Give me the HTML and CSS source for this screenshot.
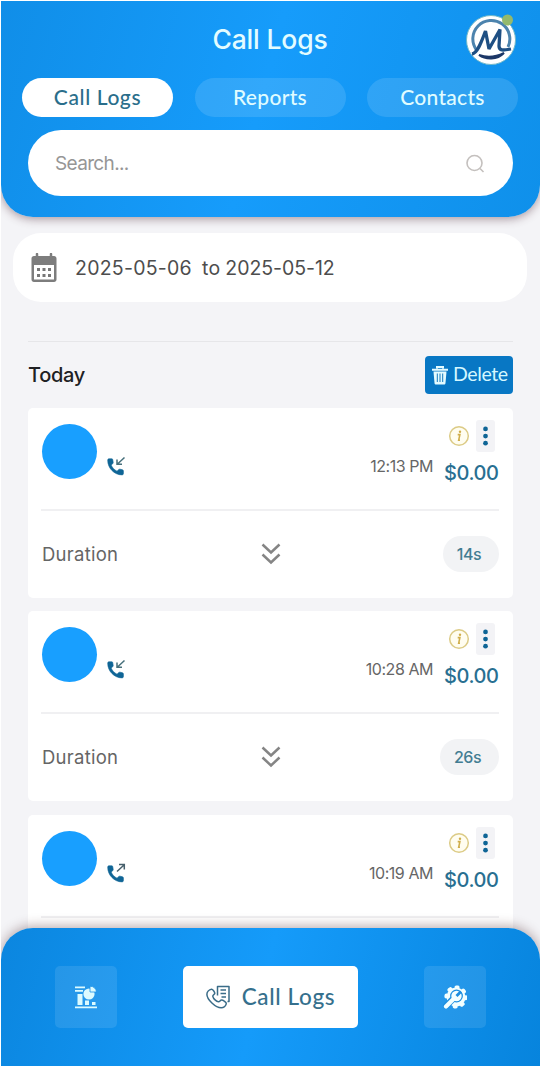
FILE: index.html
```html
<!DOCTYPE html>
<html lang="en">
<head>
<meta charset="utf-8">
<title>Call Logs</title>
<link rel="stylesheet" href="styles.css">
</head>
<body>
<svg class="defs" width="0" height="0" aria-hidden="true">
  <symbol id="handset" viewBox="0 0 18 18"><path d="M.7 2.2C.7 1.3 1.2.8 2 .8h2.700c.7 0 1 .5 1.100 1.100l.4 2.500c.1.5 0 .9-.4 1.200L4.200 7.200c1.200 2.600 3.200 4.600 5.800 6l1.800-1.700c.4-.3.800-.4 1.300-.3l2.300.5c.7.2 1 .6 1 1.200v2.700c0 .8-.5 1.300-1.300 1.300C7.300 16.900.7 10.200.7 2.200z" fill="#0f6596" stroke="#0f6596" stroke-width=".6"/></symbol>
  <symbol id="incoming" viewBox="0 0 20 20"><use href="#handset" x="0" y="2" width="18" height="18"/><path d="M17.500 1.500 10.500 8M10 3.500V8.300h5" fill="none" stroke="#47707c" stroke-width="1.500"/></symbol>
  <symbol id="outgoing" viewBox="0 0 20 20"><use href="#handset" x="0" y="2" width="18" height="18"/><path d="M10 8.500 17 2M12 1.500h5.300v5" fill="none" stroke="#47606c" stroke-width="1.500"/></symbol>
  <symbol id="info" viewBox="0 0 22 22"><circle cx="11" cy="11" r="9.300" fill="#fffdf0" stroke="#dccb86" stroke-width="1.500"/><circle cx="12" cy="6.800" r="1.200" fill="#d0ae4b"/><path d="M9.700 9.600h2.200l-1.200 5.600h1.300" fill="none" stroke="#d0ae4b" stroke-width="1.600"/></symbol>
  <symbol id="dots" viewBox="0 0 20 32"><g fill="#0f6596"><circle cx="10" cy="8.500" r="2.500"/><circle cx="10" cy="16" r="2.500"/><circle cx="10" cy="23.500" r="2.500"/></g></symbol>
  <symbol id="chevrons" viewBox="0 0 20 22"><path d="m1.500 1.500 8.500 8 8.500-8M1.500 11.500l8.500 8 8.500-8" fill="none" stroke="#858585" stroke-width="2.500"/></symbol>
</svg>
<div class="app">
  <header class="header">
    <div class="titlebar">
      <h1 class="title">Call Logs</h1>
      <svg class="avatar" viewBox="0 0 52 52" aria-label="Profile">
        <circle cx="26" cy="27" r="24.500" fill="#fff" stroke="#72b9c9"/>
        <path d="M11.500 37A18.500 18.500 0 1 1 43 34" fill="none" stroke="#4c83ad" stroke-width="3"/>
        <path d="M14 42c7 5 18 5 25-2-8 4-17 5-25 2z" fill="#1c3767" stroke="#1c3767" stroke-width="2"/>
        <path d="M7 41c6-1 10-14 13.500-23l3.500 18L35 16.500 34 33c0 5 4 4.500 12 3" fill="none" stroke="#1e4f83" stroke-width="3.300" stroke-linejoin="bevel"/>
        <circle cx="42.500" cy="7" r="5.500" fill="#94b96c"/>
      </svg>
    </div>
    <nav class="tabs">
      <a class="tab tab-active">Call Logs</a>
      <a class="tab">Reports</a>
      <a class="tab">Contacts</a>
    </nav>
    <div class="search">
      <span>Search...</span>
      <svg width="20" height="20" viewBox="0 0 20 20"><circle cx="9.500" cy="9" r="7.500" fill="none" stroke="#c4c0be" stroke-width="1.600"/><path d="m15 14.500 3.500 3.500" stroke="#c4c0be" stroke-width="1.600"/></svg>
    </div>
  </header>
  <main class="content">
    <div class="dates">
      <svg width="26" height="30" viewBox="0 0 26 30"><path d="M3 3h20c1.500 0 2.500 1 2.500 2.500v21c0 1.500-1 2.500-2.500 2.500H3C1.500 29 .5 28 .5 26.500v-21C.5 4 1.500 3 3 3zM3 12v14.500h20V12z" fill="#7d7d7d" fill-rule="evenodd"/><path d="M6 1v5M20 1v5" stroke="#7d7d7d" stroke-width="2.500" stroke-linecap="round"/><g fill="#777"><path d="M6 15h3v3H6zM11.500 15h3v3h-3zM17 15h3v3h-3zM6 21h3v3H6zM11.500 21h3v3h-3zM17 21h3v3h-3z"/></g></svg>
      <span class="date date-from">2025-05-06</span><span class="date date-to">to</span><span class="date date-until">2025-05-12</span>
    </div>
    <section class="day">
      <div class="day-head">
        <h2 class="day-name">Today</h2>
        <button class="delete">
          <svg width="16" height="19" viewBox="0 0 16 19"><path d="M5 2.500V1h6v1.500M0 3.800h16" fill="none" stroke="#e4fbff" stroke-width="2"/><path d="M1.500 5.500h13L13.500 17c-.1 1-.7 1.500-1.500 1.500H4c-.8 0-1.400-.5-1.500-1.500z" fill="#e4fbff"/><path d="M5.300 7.500v8.500M8 7.500v8.500M10.700 7.500v8.500" stroke="#1479bd" stroke-width="1"/></svg>
          <span>Delete</span>
        </button>
      </div>
      <article class="card">
        <div class="call">
          <span class="caller"></span><svg class="direction"><use href="#incoming"/></svg>
          <span class="time">12:13 PM</span>
          <div class="side"><div class="actions"><svg class="info"><use href="#info"/></svg><svg class="more"><use href="#dots"/></svg></div><span class="amount">$0.00</span></div>
        </div>
        <div class="detail"><span class="label">Duration</span><svg class="expand"><use href="#chevrons"/></svg><span class="chip"><span>14s</span></span></div>
      </article>
      <article class="card">
        <div class="call">
          <span class="caller"></span><svg class="direction"><use href="#incoming"/></svg>
          <span class="time">10:28 AM</span>
          <div class="side"><div class="actions"><svg class="info"><use href="#info"/></svg><svg class="more"><use href="#dots"/></svg></div><span class="amount">$0.00</span></div>
        </div>
        <div class="detail"><span class="label">Duration</span><svg class="expand"><use href="#chevrons"/></svg><span class="chip"><span>26s</span></span></div>
      </article>
      <article class="card">
        <div class="call">
          <span class="caller"></span><svg class="direction"><use href="#outgoing"/></svg>
          <span class="time">10:19 AM</span>
          <div class="side"><div class="actions"><svg class="info"><use href="#info"/></svg><svg class="more"><use href="#dots"/></svg></div><span class="amount">$0.00</span></div>
        </div>
        <div class="detail"></div>
      </article>
    </section>
  </main>
  <footer class="bottom">
    <a class="nav-icon">
      <svg width="24" height="24" viewBox="0 0 24 24" fill="#dcfbff"><path d="M1 1.500h10v1.800H1zM1 5h8v1.800H1zM3.500 9h5v11h-5zM11 15.500h4V20h-4zM18 17h3.500v3H18zM1 21.500h22v1.800H1z"/><circle cx="15" cy="9" r="5.600"/><path d="M16 7V1.300A6 6 0 0 1 22.500 7z" stroke="#1d93e8" stroke-width=".8"/></svg>
    </a>
    <a class="nav-current">
      <svg width="24" height="24" viewBox="0 0 24 24" fill="none" stroke="#3a6c88" stroke-width="1.500" stroke-linejoin="round"><path d="M5.500 4.200c1.200-.2 3.300 3 3.300 4 0 1.400-2.300 1.500-2 3.100.5 2.500 3.600 5.300 5.700 5.500 1.400.1 1.600-1.700 3-1.700 1.600 0 5 2.300 4.800 3.600-.4 2.200-2.700 4.100-5.100 4.100C9.500 22.800.9 14.500.9 9.200c0-2.500 2.200-4.600 4.600-5z"/><path d="M11.500 7V1.500h11.500v15h-1.500M11.500 7v3.500"/><path d="M14.500 5h5.500M14.500 8.500h5.500M15.500 12h4.500"/></svg>
      <span>Call Logs</span>
    </a>
    <a class="nav-icon">
      <svg width="24" height="24" viewBox="0 0 24 24"><circle cx="13" cy="12" r="9.500" fill="#f2ffff"/><circle cx="13" cy="12" r="9.800" fill="none" stroke="#f2ffff" stroke-width="3.600" stroke-linecap="round" stroke-dasharray="1.500 6.197"/><path d="M1 23 10 14" stroke="#1b8ee0" stroke-width="6.500"/><circle cx="13.500" cy="11" r="5.800" fill="#f2ffff" stroke="#1b8ee0" stroke-width="1.200"/><path d="M3 21.500 11 13.500" stroke="#f2ffff" stroke-width="4.200" stroke-linecap="round"/><path d="m13.500 11 4.500-4.500" stroke="#1b8ee0" stroke-width="2.800"/></svg>
    </a>
  </footer>
</div>
</body>
</html>
```
FILE: styles.css
```css
* { box-sizing: border-box; }
body { margin: 0; background: #fff; font-family: Inter, "Open Sans", sans-serif; }
svg { display: block; flex: none; }
.defs { position: absolute; }
.app {
  position: relative;
  width: 539px;
  height: 1065px;
  margin: 1px;
  overflow: hidden;
  background: #f4f4f7;
}
.header {
  height: 216px;
  padding: 12px 22px 0 21px;
  border-radius: 0 0 32px 32px;
  background: linear-gradient(105deg, #108ee8 0%, #169cfb 48%, #0f90ea 100%);
  box-shadow: 0 2px 10px rgba(70, 35, 50, .45);
}
.titlebar {
  display: grid;
  grid-template-columns: 52px 1fr 52px;
  height: 65px;
}
.title {
  grid-column: 2;
  margin: 8px 0 0;
  text-align: center;
  color: #e3fcff;
  font: 500 26.500px/36px Inter, sans-serif;
  letter-spacing: -.15px;
}
.avatar { width: 52px; height: 52px; margin-left: -1px; grid-column: 3; }
.tabs { display: grid; grid-template-columns: repeat(3, 151px); justify-content: space-between; }
.tab {
  height: 39px;
  border-radius: 20px;
  background: rgba(255, 255, 255, .12);
  color: #e0fcff;
  text-align: center;
  font: 500 21px/38px Lato, sans-serif;
  letter-spacing: .3px;
}
.tab-active { background: #fff; color: #2a6e8b; letter-spacing: .6px; }
.search {
  display: flex;
  align-items: center;
  justify-content: space-between;
  height: 66px;
  margin: 13px 5px 0 6px;
  padding: 1px 28px 0 27px;
  border-radius: 33px;
  background: #fff;
  color: #969696;
  font-size: 19px;
  letter-spacing: -.65px;
}
.dates {
  display: flex;
  align-items: center;
  height: 69px;
  margin: 16px 13px 0 12px;
  padding-left: 18px;
  border-radius: 28px;
  background: #fff;
  color: #4d4d4d;
}
.date { font-size: 19.500px; letter-spacing: .25px; }
.date-from { margin-left: 18px; }
.date-to { margin: 0 5px 0 10px; }
.date-until { letter-spacing: -.05px; }
.day { margin: 39px 27px 0; border-top: 1px solid #e6e6e9; }
.day-head { display: flex; justify-content: space-between; height: 66px; padding-top: 14px; }
.day-name { margin: 0; color: #202023; font: 500 20px/39px Inter, sans-serif; letter-spacing: -.3px; }
.delete {
  display: flex;
  align-items: center;
  gap: 5px;
  width: 88px;
  height: 38px;
  padding: 0 7px;
  border: 0;
  border-radius: 4px;
  background: #0877c4;
  color: #d4f7ff;
  font: 19.500px/34px Lato, sans-serif;
  letter-spacing: -.4px;
}
.delete span { margin-top: -3px; }
.card { height: 190px; margin-bottom: 13.400px; padding: 0 14px 0 13px; border-radius: 5px; background: #fff; }
.call { display: flex; height: 103px; padding-top: 12px; border-bottom: 2px solid #f0f0f2; }
.caller { width: 55px; height: 55px; margin: 4px 0 0 1px; border-radius: 50%; background: #189fff; }
.direction { width: 20px; height: 20px; margin: 36px 0 0 10px; }
.time { margin: 34px 11px 0 auto; color: #666; font-size: 16px; line-height: 24px; letter-spacing: -.45px; }
.side { width: 55px; }
.actions { display: flex; align-items: center; justify-content: space-between; padding: 0 4px; }
.info { width: 22px; height: 22px; }
.more { width: 19px; height: 32px; border-radius: 3px; background: #f3f3f6; }
.amount { display: block; margin-top: 9px; color: #286f91; font-size: 20px; font-weight: 500; line-height: 24px; letter-spacing: -.45px; white-space: nowrap; }
.detail { display: grid; grid-template-columns: 1fr 20px 1fr; align-items: center; height: 86px; }
.label { padding-left: 1px; color: #656565; font-size: 18.500px; letter-spacing: .25px; }
.expand { width: 20px; height: 22px; margin-left: 1px; }
.chip {
  justify-self: end;
  padding: 0 18px 0 14px;
  border-radius: 18px;
  background: #f2f3f5;
  color: #437d92;
  font-size: 16px;
  font-weight: 500;
  line-height: 36px;
  letter-spacing: -.5px;
}
.bottom {
  position: absolute;
  inset: auto 0 0;
  display: flex;
  justify-content: space-between;
  height: 138px;
  padding: 38px 54px 0;
  border-radius: 32px 32px 0 0;
  background: linear-gradient(105deg, #0b86df 0%, #159bfa 48%, #0784dd 100%);
  box-shadow: 0 -2px 12px rgba(70, 35, 40, .38);
}
.nav-icon {
  display: grid;
  place-items: center;
  width: 62px;
  height: 62px;
  border-radius: 5px;
  background: rgba(255, 255, 255, .1);
}
.nav-current {
  display: flex;
  align-items: center;
  justify-content: center;
  gap: 12px;
  width: 175px;
  height: 62px;
  border-radius: 5px;
  background: #fff;
  color: #35708d;
  font: 500 22.500px/60px Lato, sans-serif;
  letter-spacing: .65px;
}
```
